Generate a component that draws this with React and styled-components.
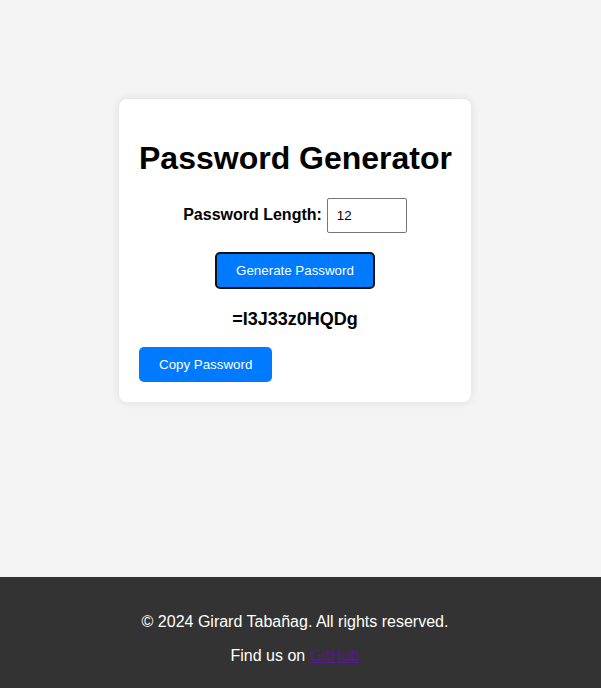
import React from "react";
import styled, { createGlobalStyle } from "styled-components";

const GlobalStyle = createGlobalStyle`
  html, body {
    margin: 0;
    padding: 0;
    background: #f4f4f4;
    font-family: "Liberation Sans", Arial, sans-serif;
    color: #000;
  }
  * { box-sizing: border-box; }
`;

const Main = styled.main`
  padding: 99px 11px 175px 0;
  display: flex;
  justify-content: center;
`;

const Card = styled.section`
  width: 352px;
  background: #fff;
  border-radius: 8px;
  box-shadow: 0 0 10px rgba(0, 0, 0, 0.1);
  padding: 20px;
`;

const Title = styled.h1`
  font-size: 32px;
  font-weight: bold;
  margin: 21px 0;
  text-align: center;
  white-space: nowrap;
  line-height: normal;
`;

const Field = styled.div`
  display: flex;
  justify-content: center;
  align-items: baseline;
  gap: 5px;
  margin-bottom: 19px;
`;

const Label = styled.label`
  font-size: 16px;
  font-weight: bold;
`;

const Input = styled.input`
  width: 80px;
  height: 35px;
  padding: 0 9px;
  border: 1px solid #767676;
  border-radius: 2px;
  font-family: "Liberation Sans", Arial, sans-serif;
  font-size: 13.333px;
  color: #000;
  background: #fff;
`;

const Centered = styled.div`
  display: flex;
  justify-content: center;
`;

const Button = styled.button`
  background: #007bff;
  color: #fff;
  font-family: "Liberation Sans", Arial, sans-serif;
  font-size: 13.333px;
  line-height: normal;
  border-radius: 5px;
  cursor: pointer;
  border: ${(p) => (p.$focused ? "2px solid #111" : "none")};
  padding: ${(p) => (p.$focused ? "9px 19px" : "10px 20px")};
`;

const Output = styled.p`
  font-size: 18px;
  font-weight: bold;
  text-align: center;
  margin: 20px 0 17px;
  line-height: normal;
`;

const Footer = styled.footer`
  background: #333;
  color: #fff;
  text-align: center;
  padding: 20px 11px 8px 0;
  font-size: 16px;
`;

const FooterText = styled.p`
  margin: 16px 0;
  line-height: normal;
`;

const Link = styled.a`
  color: #551a8b;
  text-decoration: underline;
`;

export default function App() {
  return (
    <>
      <GlobalStyle />
      <Main>
        <Card>
          <Title>Password Generator</Title>
          <Field>
            <Label htmlFor="len">Password Length:</Label>
            <Input id="len" type="text" defaultValue="12" />
          </Field>
          <Centered>
            <Button $focused>Generate Password</Button>
          </Centered>
          <Output>=I3J33z0HQDg</Output>
          <Button>Copy Password</Button>
        </Card>
      </Main>
      <Footer>
        <FooterText>© 2024 Girard Tabañag. All rights reserved.</FooterText>
        <FooterText>
          Find us on <Link href="#">GitHub</Link>
        </FooterText>
      </Footer>
    </>
  );
}
